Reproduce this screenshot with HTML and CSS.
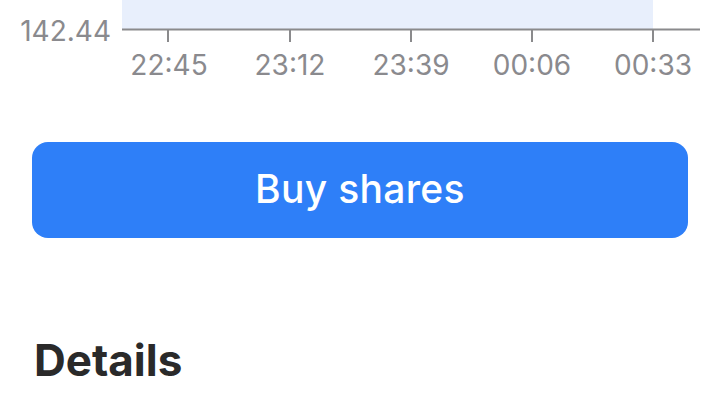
FILE: index.html
```html
<!DOCTYPE html>
<html lang="en">
<head>
    <meta charset="UTF-8">
    <meta name="viewport" content="width=device-width, initial-scale=1.0">
    <title>Stock</title>
    <link rel="stylesheet" href="styles.css">
</head>
<body>

<section class="chart">
    <svg class="chart-svg" width="720" height="84" viewBox="0 0 720 84">
        <rect class="area" x="122" y="0" width="531" height="29"></rect>
        <line class="axis" x1="122" y1="29.5" x2="700" y2="29.5"></line>
        <line class="tick" x1="168" y1="30" x2="168" y2="42"></line>
        <line class="tick" x1="290" y1="30" x2="290" y2="42"></line>
        <line class="tick" x1="411" y1="30" x2="411" y2="42"></line>
        <line class="tick" x1="532" y1="30" x2="532" y2="42"></line>
        <line class="tick" x1="653" y1="30" x2="653" y2="42"></line>
        <text class="y-label" x="111" y="41">142.44</text>
        <text class="x-label" x="169" y="74.5">22:45</text>
        <text class="x-label" x="290" y="74.5">23:12</text>
        <text class="x-label" x="411" y="74.5">23:39</text>
        <text class="x-label" x="532" y="74.5">00:06</text>
        <text class="x-label" x="653" y="74.5">00:33</text>
    </svg>
</section>

<section class="actions">
    <button class="buy-button">Buy shares</button>
</section>

<section class="details">
    <h2>Details</h2>
</section>

</body>
</html>
```

FILE: styles.css
```css
body {
    font-family: Inter, "Noto Sans", sans-serif;
    margin: 0;
    padding: 0;
    background-color: #fff;
}

.chart-svg {
    display: block;
}

.area {
    fill: #e8effc;
}

.axis, .tick {
    stroke: #8a8a8c;
    stroke-width: 2;
}

.y-label, .x-label {
    font-family: Inter, sans-serif;
    font-size: 28px;
    fill: #8a8a8e;
}

.y-label {
    text-anchor: end;
}

.x-label {
    text-anchor: middle;
}

.actions {
    padding: 58px 32px 0;
}

.buy-button {
    display: flex;
    align-items: center;
    justify-content: center;
    width: 100%;
    height: 96px;
    padding: 0 0 3px;
    font-family: Inter, sans-serif;
    font-size: 39px;
    font-weight: 500;
    letter-spacing: 0.3px;
    background-color: #2e7ff8;
    color: #fff;
    border: none;
    border-radius: 16px;
    cursor: pointer;
}

.details {
    padding: 96px 34px 0;
}

.details h2 {
    margin: 0;
    font-size: 44px;
    font-weight: 700;
    line-height: 1.2;
    color: #2a2a2a;
}
```
